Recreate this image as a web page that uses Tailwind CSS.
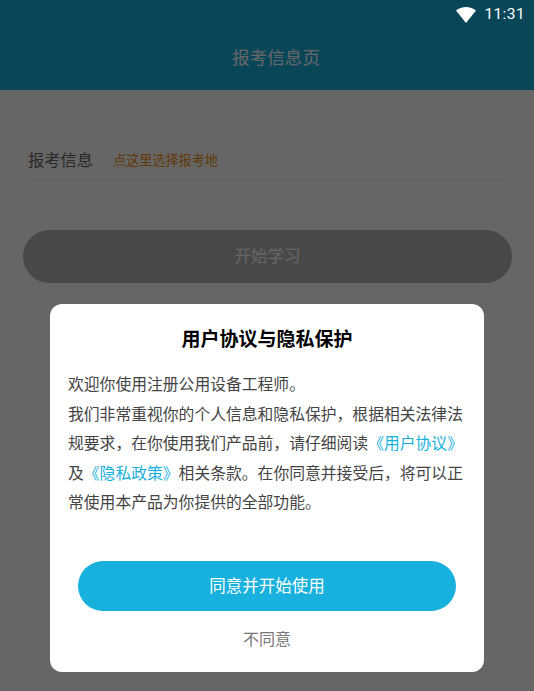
<!DOCTYPE html>
<html lang="zh-CN">
<head>
  <meta charset="UTF-8" />
  <meta name="viewport" content="width=device-width, initial-scale=1.0" />
  <title>报考信息页</title>
  <script src="https://cdn.jsdelivr.net/npm/@tailwindcss/browser@4"></script>
</head>
<body class="font-['Roboto','Noto_Sans_CJK_SC',sans-serif]">
  <div class="relative w-[534px] h-[691px] overflow-hidden bg-white">
    <!-- Header -->
    <header class="h-[90px] bg-[#18b0dd]">
      <div class="flex h-[29px] items-center justify-end pr-[9px] text-white relative z-20">
        <svg class="w-5 h-4 mr-[8px]" viewBox="0 0 20 16" fill="#fff"><path d="M0 3.600C2.800 1.400 6.200 0 10 0s7.200 1.400 10 3.600L10 16z"/></svg>
        <span class="text-[15.500px] tracking-[0.4px]">11:31</span>
      </div>
      <h1 class="mt-[3px] pl-[18px] text-center text-[17.600px] leading-[52px] text-white">报考信息页</h1>
    </header>

    <!-- Form -->
    <main class="px-[28px] pt-[50px]">
      <div class="flex items-center h-[40px] border-b border-gray-100">
        <span class="pt-[3px] text-[16.300px] text-[#666]">报考信息</span>
        <span class="ml-[20px] pt-[2px] text-[13.100px] text-[#f5900f]">点这里选择报考地</span>
      </div>
      <button class="-mx-[5px] mt-[50px] block w-[489px] h-[53px] pt-[2px] rounded-full bg-[#b4b4b4] text-[16.500px] text-white">开始学习</button>
    </main>

    <!-- Dialog -->
    <div class="absolute inset-0 z-10 flex items-end justify-center bg-black/60 pb-[19px]">
      <div class="w-[434px] h-[368px] rounded-xl bg-white px-[18px]">
        <h2 class="pt-[22px] text-center text-[19px] leading-[28px] font-bold text-black">用户协议与隐私保护</h2>
        <p class="mt-[16px] w-[398px] text-[15.800px] leading-[29.500px] text-[#444]">欢迎你使用注册公用设备工程师。<br>我们非常重视你的个人信息和隐私保护，根据相关法律法规要求，在你使用我们产品前，请仔细阅读<span class="text-[#18b0dd]">《用户协议》</span>及<span class="text-[#18b0dd]">《隐私政策》</span>相关条款。在你同意并接受后，将可以正常使用本产品为你提供的全部功能。</p>
        <button class="mx-[10px] mt-[43px] block w-[378px] h-[50px] pt-[4px] rounded-full bg-[#18b0dd] text-[16.500px] text-white">同意并开始使用</button>
        <button class="mt-[15px] block w-full text-center text-[16px] leading-[28px] text-[#777]">不同意</button>
      </div>
    </div>
  </div>
</body>
</html>
